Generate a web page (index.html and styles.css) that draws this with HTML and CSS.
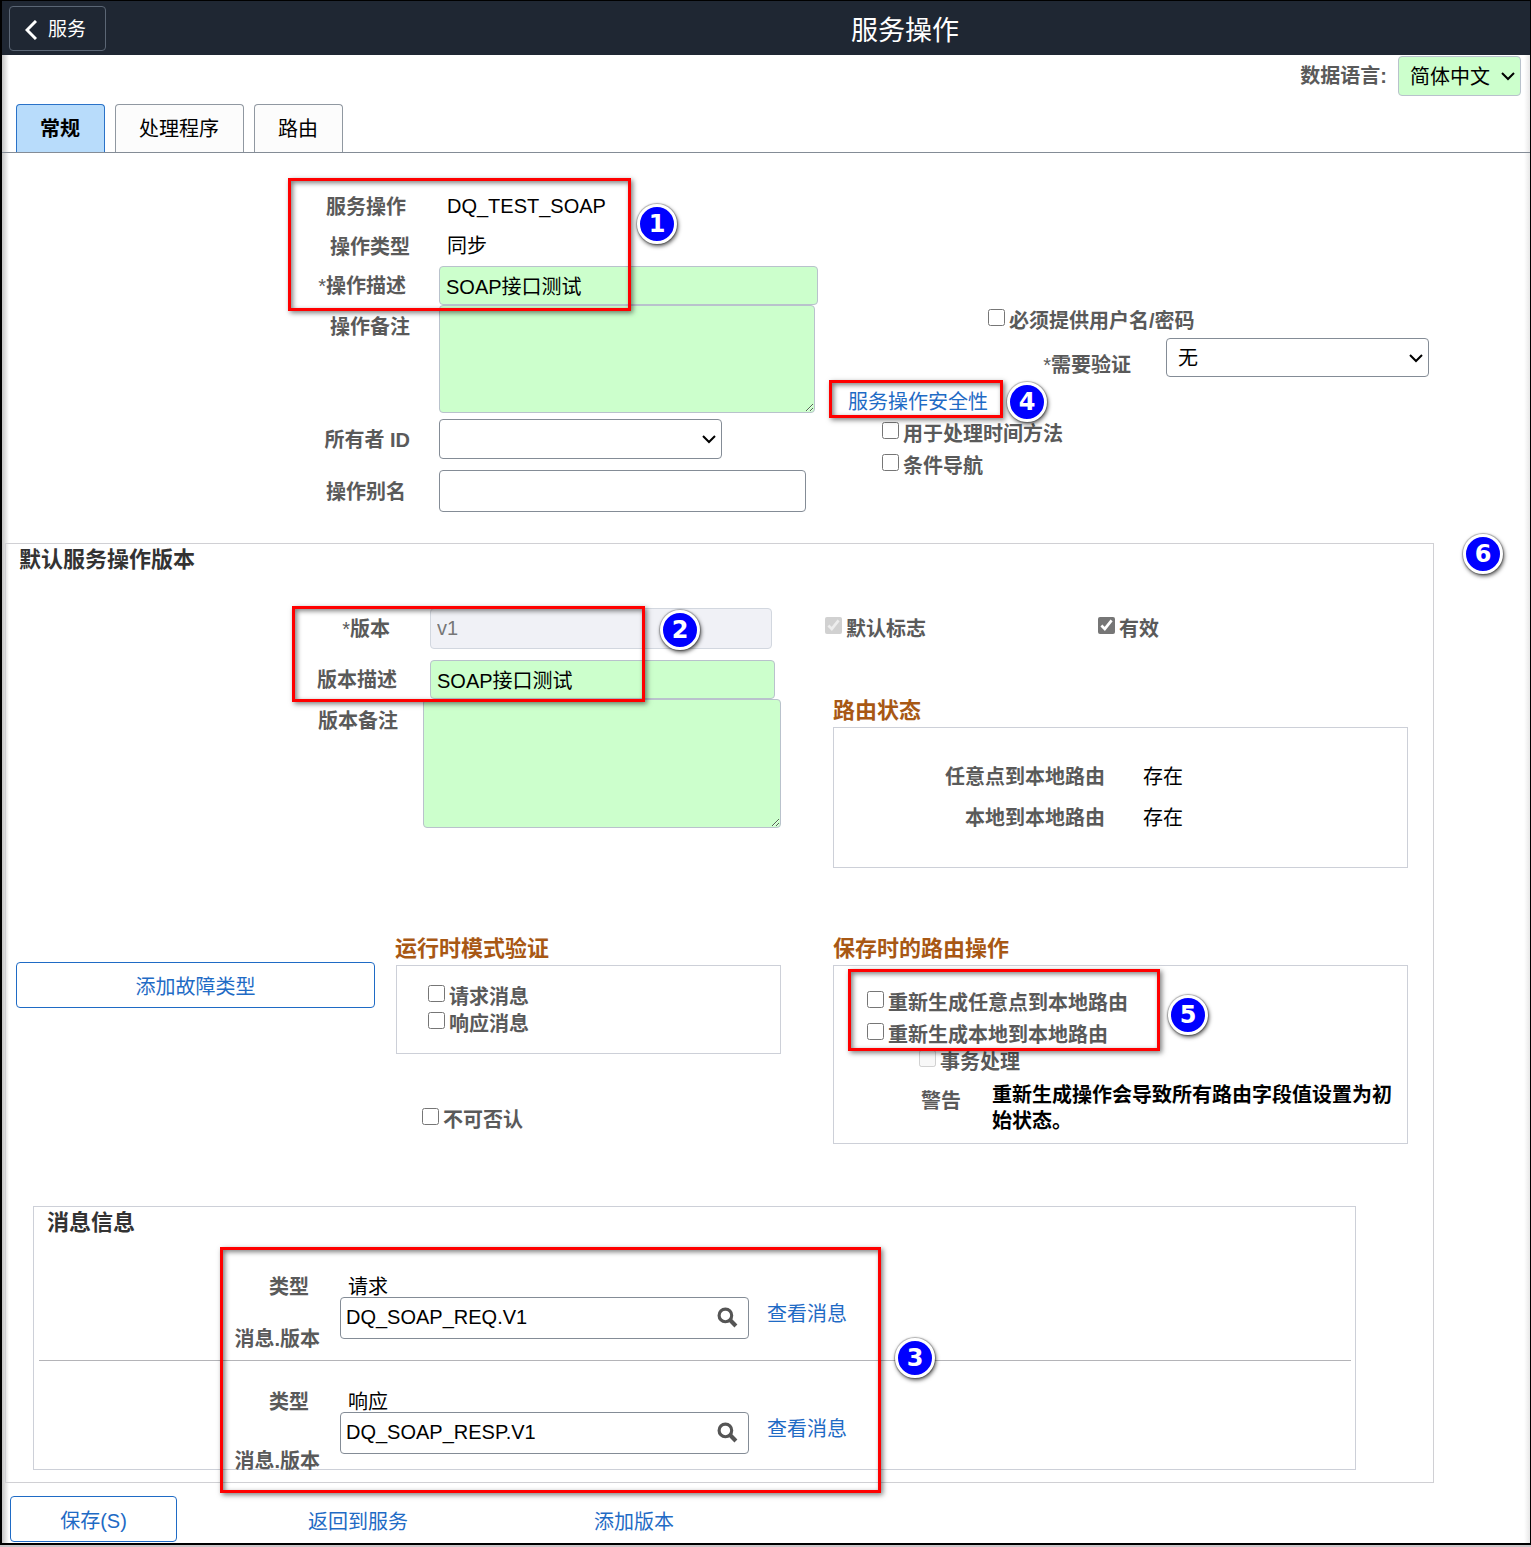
FILE: index.html
```html
<!DOCTYPE html>
<html lang="zh-CN">
<head>
<meta charset="utf-8">
<meta name="viewport" content="width=device-width, initial-scale=1">
<title>服务操作</title>
<link rel="stylesheet" href="styles.css">
</head>
<body>
<div class="frame">
  <header class="topbar">
    <button type="button" class="back">
      <svg class="back-icon" viewBox="0 0 12 20" aria-hidden="true"><path d="M11 1 2 10l9 9" fill="none" stroke="currentColor" stroke-width="3"/></svg>
      <span>服务</span>
    </button>
    <h1 class="page-title">服务操作</h1>
  </header>

  <main class="content">
    <div class="language">
      <label class="caption" for="lang">数据语言:</label>
      <select class="select select-lang" id="lang"><option>简体中文</option></select>
    </div>

    <nav class="tabs">
      <button type="button" class="tab tab-active">常规</button>
      <button type="button" class="tab">处理程序</button>
      <button type="button" class="tab">路由</button>
    </nav>

    <section class="general">
      <div class="general-main">
        <div class="row">
          <span class="caption row-label label-far">服务操作</span>
          <span class="value">DQ_TEST_SOAP</span>
        </div>
        <div class="row">
          <span class="caption row-label">操作类型</span>
          <span class="value">同步</span>
        </div>
        <div class="row">
          <label class="caption row-label label-far" for="op-desc"><span class="star">*</span>操作描述</label>
          <input class="field field-green op-desc" id="op-desc" type="text" value="SOAP接口测试">
        </div>
        <div class="row row-top">
          <label class="caption row-label" for="op-note">操作备注</label>
          <textarea class="field field-green op-note" id="op-note"></textarea>
        </div>
        <div class="row row-owner">
          <label class="caption row-label" for="owner">所有者 ID</label>
          <select class="select owner" id="owner"><option></option></select>
        </div>
        <div class="row row-alias">
          <label class="caption row-label label-far" for="alias">操作别名</label>
          <input class="field alias" id="alias" type="text">
        </div>
      </div>
      <div class="general-side">
        <label class="check check-user"><input type="checkbox">必须提供用户名/密码</label>
        <div class="verify">
          <label class="caption verify-label" for="verify"><span class="star">*</span>需要验证</label>
          <select class="select verify-select" id="verify"><option>无</option></select>
        </div>
        <a class="link security-link" href="#">服务操作安全性</a>
        <div class="side-checks">
          <label class="check"><input type="checkbox">用于处理时间方法</label>
          <label class="check"><input type="checkbox">条件导航</label>
        </div>
      </div>
    </section>

    <section class="version">
      <h2 class="section-title">默认服务操作版本</h2>
      <div class="version-upper">
        <div class="version-main">
          <div class="row">
            <label class="caption version-label label-short" for="ver"><span class="star">*</span>版本</label>
            <input class="field ver" id="ver" type="text" value="v1" disabled>
          </div>
          <div class="row row-alias">
            <label class="caption version-label" for="ver-desc">版本描述</label>
            <input class="field field-green ver-desc" id="ver-desc" type="text" value="SOAP接口测试">
          </div>
          <div class="row row-top">
            <label class="caption version-label label-note" for="ver-note">版本备注</label>
            <textarea class="field field-green ver-note" id="ver-note"></textarea>
          </div>
        </div>
        <div class="version-side">
          <div class="flags">
            <label class="check"><input type="checkbox" checked disabled>默认标志</label>
            <label class="check"><input type="checkbox" checked>有效</label>
          </div>
          <div class="status">
            <h3 class="group-title">路由状态</h3>
            <dl class="box status-box">
              <dt class="caption">任意点到本地路由</dt><dd>存在</dd>
              <dt class="caption">本地到本地路由</dt><dd>存在</dd>
            </dl>
          </div>
        </div>
      </div>

      <div class="version-lower">
        <button type="button" class="button fault-button">添加故障类型</button>
        <div>
          <h3 class="group-title">运行时模式验证</h3>
          <div class="box schema-box">
            <label class="check"><input type="checkbox">请求消息</label>
            <label class="check"><input type="checkbox">响应消息</label>
          </div>
          <label class="check check-deny"><input type="checkbox">不可否认</label>
        </div>
        <div class="routing">
          <h3 class="group-title">保存时的路由操作</h3>
          <div class="box routing-box">
            <label class="check"><input type="checkbox">重新生成任意点到本地路由</label>
            <label class="check check-local"><input type="checkbox">重新生成本地到本地路由</label>
            <label class="check check-tx"><input type="checkbox" disabled>事务处理</label>
            <div class="warning">
              <span class="caption warning-label">警告</span>
              <p class="warning-text">重新生成操作会导致所有路由字段值设置为初始状态。</p>
            </div>
          </div>
        </div>
      </div>

      <div class="messages">
        <h2 class="section-title">消息信息</h2>
        <div class="message message-request">
          <div class="message-labels">
            <span class="caption kind-label">类型</span>
            <label class="caption" for="req">消息.版本</label>
          </div>
          <div class="message-fields">
            <span class="kind">请求</span>
            <div class="lookup">
              <input class="lookup-input" id="req" type="text" value="DQ_SOAP_REQ.V1">
              <button type="button" class="lookup-button" aria-label="查找">
                <svg viewBox="0 0 20 20" aria-hidden="true"><circle cx="8" cy="8" r="6" fill="none" stroke="currentColor" stroke-width="3"/><path d="m12 12 6 6" stroke="currentColor" stroke-width="4"/></svg>
              </button>
            </div>
          </div>
          <a class="link message-link" href="#">查看消息</a>
        </div>
        <hr class="divider">
        <div class="message message-response">
          <div class="message-labels">
            <span class="caption kind-label">类型</span>
            <label class="caption" for="resp">消息.版本</label>
          </div>
          <div class="message-fields">
            <span class="kind">响应</span>
            <div class="lookup">
              <input class="lookup-input" id="resp" type="text" value="DQ_SOAP_RESP.V1">
              <button type="button" class="lookup-button" aria-label="查找">
                <svg viewBox="0 0 20 20" aria-hidden="true"><circle cx="8" cy="8" r="6" fill="none" stroke="currentColor" stroke-width="3"/><path d="m12 12 6 6" stroke="currentColor" stroke-width="4"/></svg>
              </button>
            </div>
          </div>
          <a class="link message-link" href="#">查看消息</a>
        </div>
      </div>
    </section>

    <footer class="actions">
      <button type="button" class="button save-button">保存(S)</button>
      <a class="link return-link" href="#">返回到服务</a>
      <a class="link" href="#">添加版本</a>
    </footer>
  </main>

  <div class="marks">
    <div class="mark mark-1"></div><span class="badge badge-1">1</span>
    <div class="mark mark-2"></div><span class="badge badge-2">2</span>
    <div class="mark mark-3"></div><span class="badge badge-3">3</span>
    <div class="mark mark-4"></div><span class="badge badge-4">4</span>
    <div class="mark mark-5"></div><span class="badge badge-5">5</span>
    <span class="badge badge-6">6</span>
  </div>
</div>
</body>
</html>
```
FILE: styles.css
```css
* { box-sizing: border-box; }

body {
  margin: 0;
  padding-bottom: 2px;
  background: #c9c3c6;
  color: #000;
  font: 20px/24px "Liberation Sans", "Noto Sans CJK SC", sans-serif;
}

h1, h2, h3, p, dl, dd { margin: 0; }
button, input, select, textarea { margin: 0; font: inherit; color: inherit; }

.frame {
  position: relative;
  border: solid #000;
  border-width: 1px 1px 2px 2px;
  background: #fff;
}

/* Top bar */
.topbar {
  display: flex;
  align-items: center;
  height: 54px;
  padding-left: 7px;
  background: #1f2733;
  color: #fff;
}
.back {
  display: flex;
  align-items: center;
  gap: 11px;
  width: 97px;
  height: 45px;
  padding: 3px 15px 0;
  border: 1px solid #5b6675;
  border-radius: 4px;
  background: none;
  font-size: 19px;
}
.back-icon { width: 12px; height: 20px; }
.page-title {
  flex: 1;
  padding: 6px 0 0 174px;
  text-align: center;
  font-size: 27px;
  line-height: 32px;
  font-weight: 400;
}

.content {
  padding-bottom: 1px;
  background: linear-gradient(to right, #c4c4c4, #fff 7px, #fff calc(100% - 6px), #e8e8e8);
}

/* Shared text and controls */
.caption { color: #5a5a5a; font-weight: 700; }
.star { font-weight: 400; }
.link { color: #1f6bc5; text-decoration: none; }

.field, .select {
  height: 39px;
  border: 1px solid #848c96;
  border-radius: 4px;
  background: #fff;
}
.field { padding: 0 6px; }
.field-green, .select-lang { background-color: #cfc; border-color: #b9c2cc; }
.field:disabled { background: #f0f1f6; border-color: #d2d7df; color: #777; }
.select {
  appearance: none;
  padding: 1px 24px 0 11px;
  background-image: url("data:image/svg+xml,%3Csvg xmlns='http://www.w3.org/2000/svg' viewBox='0 0 14 10'%3E%3Cpath d='m1 2 6 6 6-6' fill='none' stroke='%23000' stroke-width='2'/%3E%3C/svg%3E");
  background-position: right 5px center;
  background-repeat: no-repeat;
  background-size: 14px 10px;
}

.check {
  display: flex;
  align-items: flex-start;
  color: #5a5a5a;
  font-weight: 700;
}
.check input {
  flex: none;
  width: 17px;
  height: 17px;
  margin: 0 4px 0 0;
  accent-color: #767676;
}

.button {
  height: 46px;
  padding: 4px 0 0;
  border: 1px solid #1f6bc5;
  border-radius: 4px;
  background: #fff;
  color: #1f6bc5;
}

.section-title { padding-left: 13px; color: #333; font-size: 22px; line-height: 32px; }
.group-title { color: #a85814; font-size: 22px; line-height: 32px; }
.box { border: 1px solid #cdd0d8; }

/* Language and tabs */
.language {
  display: flex;
  justify-content: flex-end;
  align-items: center;
  gap: 11px;
  padding: 1px 9px 8px;
}
.select-lang { width: 123px; height: 40px; }
.tabs {
  display: flex;
  align-items: flex-end;
  gap: 10px;
  padding-left: 14px;
  border-bottom: 1px solid #848c96;
}
.tab {
  height: 48px;
  padding: 0 24px 0 23px;
  border: 1px solid #9098a1;
  border-bottom: 0;
  border-radius: 4px 4px 0 0;
  background: #fcfcfc;
}
.tab-active { border-color: #2a72c8; background: #b8dcfb; font-weight: 700; }

/* General section */
.general { display: flex; padding: 33px 0 31px; }
.general-main { flex: none; width: 827px; }
.row { display: flex; align-items: center; }
.row-label { flex: none; width: 437px; padding: 1px 29px 0 0; text-align: right; }
.label-far { padding-right: 33px; }
.row-top { align-items: flex-start; }
.row-top .caption { padding-top: 10px; }
.value { padding-left: 8px; line-height: 40px; }
.row-owner { margin-top: 6px; }
.row-alias { margin-top: 11px; }
.op-desc { width: 379px; }
.op-note { width: 376px; height: 108px; }
.owner { width: 283px; height: 40px; }
.alias { width: 367px; height: 42px; }

.general-side { flex: 1; padding-top: 123px; }
.check-user { padding-left: 159px; }
.verify { display: flex; align-items: flex-end; margin-top: 5px; }
.verify-label { width: 302px; margin-right: 35px; text-align: right; }
.verify-select { width: 263px; }
.security-link { display: block; margin: 13px 0 8px 19px; }
.side-checks { display: flex; flex-direction: column; gap: 8px; padding-left: 53px; }

/* Default version section */
.version { margin: 0 96px 0 3px; border: 1px solid #d0d0d4; }
.version-upper { display: flex; padding: 32px 25px 0 0; }
.version-main { flex: none; width: 819px; }
.version-label { flex: none; width: 424px; padding: 1px 33px 0 0; text-align: right; }
.label-short { padding-right: 40px; }
.label-note { width: 417px; padding-right: 25px; }
.ver { width: 342px; height: 41px; }
.ver-desc { width: 345px; }
.ver-note { width: 358px; height: 129px; }

.version-side { flex: 1; padding-top: 9px; }
.flags { display: grid; grid-template-columns: 273px 1fr; }
.status { padding: 54px 0 0 8px; }
.status-box {
  display: grid;
  grid-template-columns: 271px 1fr;
  column-gap: 38px;
  padding: 29px 0 28px;
  line-height: 41px;
}
.status-box dt { text-align: right; }

.version-lower {
  display: grid;
  grid-template-columns: 389px 386px 1fr;
  align-items: start;
  padding: 65px 25px 0 0;
}
.fault-button { width: 359px; margin: 29px 0 0 10px; }
.schema-box { display: grid; gap: 3px; margin-left: 1px; padding: 19px 31px 17px; }
.check-deny { margin: 54px 0 0 27px; }
.routing { padding-left: 52px; }
.routing-box { padding: 25px 0 9px 33px; }
.check-local { margin-top: 8px; }
.check-tx { margin: 3px 0 0 52px; }
.warning { display: flex; margin: 8px 0 0 54px; }
.warning-label { flex: none; width: 71px; padding-top: 7px; }
.warning-text { max-width: 404px; font-weight: 700; line-height: 26px; }

/* Messages */
.messages { margin: 62px 77px 12px 27px; border: 1px solid #cdd0d8; }
.message { display: flex; align-items: flex-start; }
.message-request { height: 85px; margin-top: 36px; }
.message-response { height: 79px; margin-top: 29px; }
.message-labels {
  display: flex;
  flex-direction: column;
  gap: 28px;
  width: 306px;
  padding-right: 20px;
  text-align: right;
}
.message-response .message-labels { gap: 35px; }
.kind-label { padding-right: 11px; }
.message-fields { width: 409px; }
.kind { display: block; padding: 2px 0 0 8px; line-height: 20px; }
.lookup {
  display: flex;
  align-items: center;
  height: 42px;
  padding-bottom: 2px;
  border: 1px solid #848c96;
  border-radius: 4px;
  background: #fff;
}
.lookup-input { flex: 1; min-width: 0; padding: 0 5px; border: 0; background: none; }
.lookup-button { padding: 0 10px; border: 0; background: none; color: #555; }
.lookup-button svg { display: block; width: 21px; height: 21px; }
.message-link { margin: 27px 0 0 18px; }
.divider { height: 1px; margin: 0 4px 0 5px; border: 0; background: #b4b4b8; }

/* Footer */
.actions { display: flex; align-items: center; padding: 13px 0 0 8px; }
.actions .link { padding-top: 6px; }
.save-button { width: 167px; }
.return-link { margin: 0 186px 0 131px; }

/* Numbered callouts laid over the form */
.marks { position: absolute; inset: 0; pointer-events: none; }
.mark {
  position: absolute;
  border: 3px solid #f00;
  box-shadow: 2px 2px 5px rgba(0, 0, 0, .5), inset 2px 2px 5px rgba(0, 0, 0, .5);
}
.mark-1 { left: 286px; top: 177px; width: 343px; height: 133px; }
.mark-2 { left: 290px; top: 605px; width: 353px; height: 96px; }
.mark-3 { left: 218px; top: 1246px; width: 661px; height: 246px; }
.mark-4 { left: 827px; top: 379px; width: 174px; height: 38px; }
.mark-5 { left: 846px; top: 968px; width: 312px; height: 82px; }
.badge {
  position: absolute;
  width: 40px;
  height: 40px;
  border: 3px solid #fff;
  border-radius: 50%;
  background: #00f;
  box-shadow: 1px 2px 4px rgba(0, 0, 0, .7), 0 0 1px 1px rgba(0, 0, 0, .25);
  color: #fff;
  font: 700 24px/34px "DejaVu Sans", sans-serif;
  text-align: center;
}
.badge-1 { left: 635px; top: 203px; }
.badge-2 { left: 658px; top: 609px; }
.badge-3 { left: 893px; top: 1337px; }
.badge-4 { left: 1005px; top: 381px; }
.badge-5 { left: 1166px; top: 994px; }
.badge-6 { right: 27px; top: 533px; }
```
